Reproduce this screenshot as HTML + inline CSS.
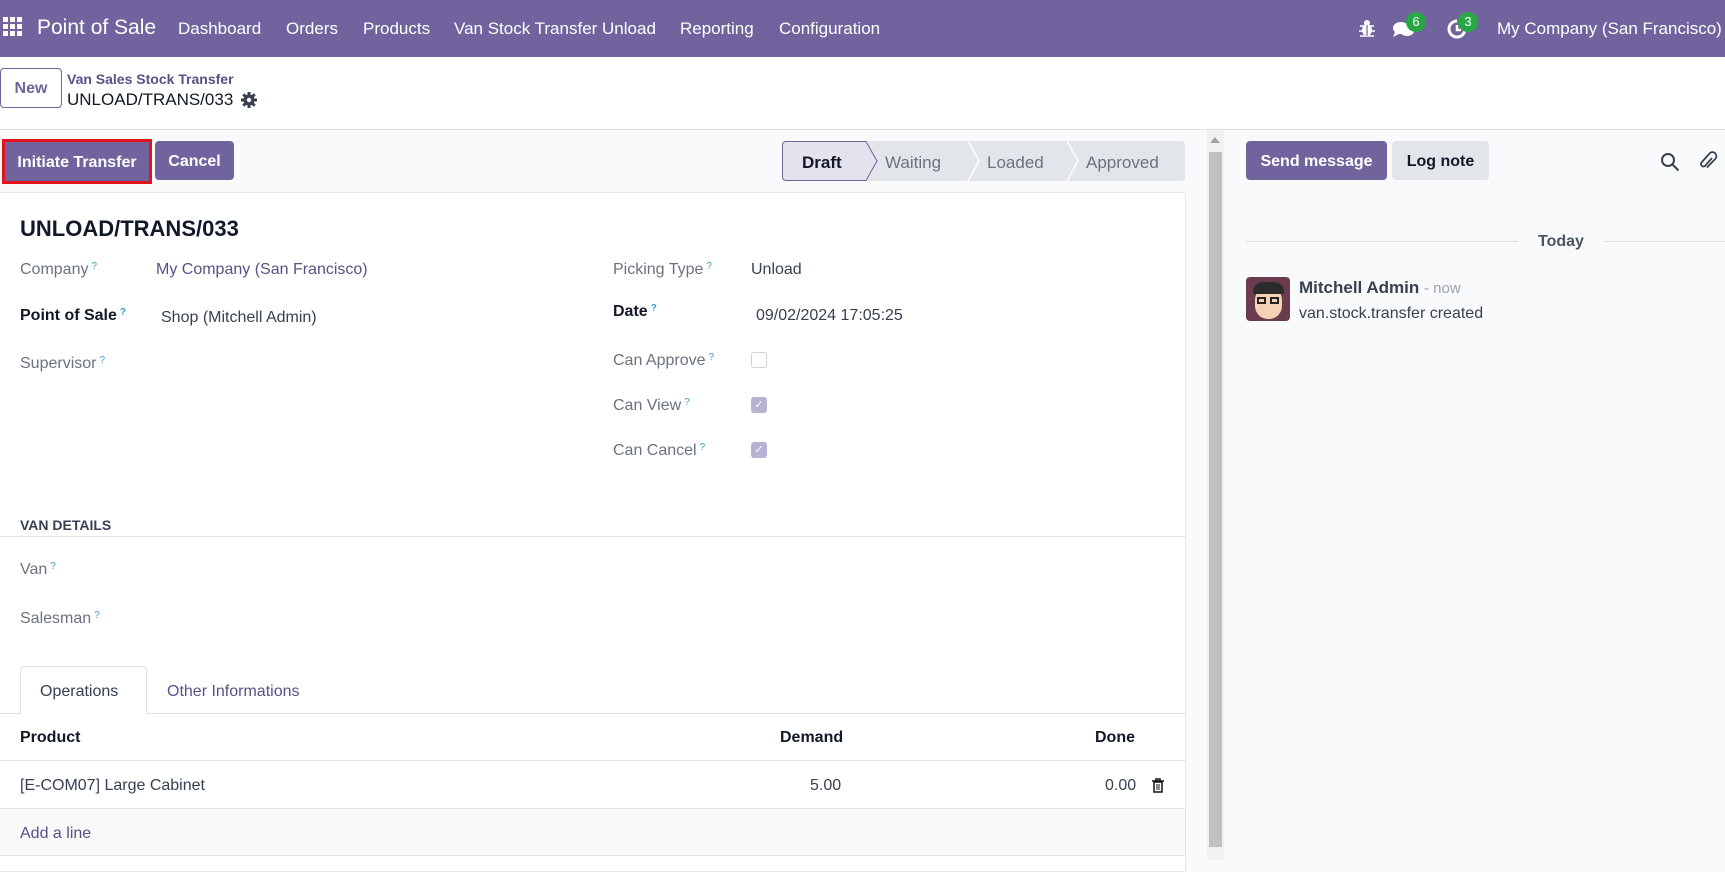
<!DOCTYPE html>
<html><head><meta charset="utf-8"><style>
*{box-sizing:border-box;margin:0;padding:0}
body{width:1725px;height:860px;overflow:hidden;font-family:"Liberation Sans",sans-serif;color:#374151;background:#f9fafb;position:relative;font-size:16px}
.a{position:absolute;white-space:nowrap}
.nav{position:absolute;left:0;top:0;width:1725px;height:57px;background:#71639e;color:#fff}
.nav .a{top:19px;font-size:17px}
.btnp{position:absolute;background:#71639e;color:#fff;font-weight:bold;border-radius:4px;text-align:center;font-size:16px}
.lbl{position:absolute;color:#6b7280;font-size:16px;white-space:nowrap}
.q{color:#3aa0c8;font-size:10px;vertical-align:top;margin-left:3px}
.dark{color:#111827;font-weight:bold}
.cb{position:absolute;width:16px;height:16px;border-radius:3px}
</style></head><body>
<div class="nav">
  <svg class="a" style="left:3px;top:17px" width="20" height="20" viewBox="0 0 20 20" fill="#fff"><rect x="0" y="0" width="5" height="5"/><rect x="7" y="0" width="5" height="5"/><rect x="14" y="0" width="5" height="5"/><rect x="0" y="7" width="5" height="5"/><rect x="7" y="7" width="5" height="5"/><rect x="14" y="7" width="5" height="5"/><rect x="0" y="14" width="5" height="5"/><rect x="7" y="14" width="5" height="5"/><rect x="14" y="14" width="5" height="5"/></svg>
  <div class="a" style="left:37px;top:16px;font-size:21px">Point of Sale</div>
  <div class="a" style="left:178px">Dashboard</div>
  <div class="a" style="left:286px">Orders</div>
  <div class="a" style="left:363px">Products</div>
  <div class="a" style="left:454px">Van Stock Transfer Unload</div>
  <div class="a" style="left:680px">Reporting</div>
  <div class="a" style="left:779px">Configuration</div>
  <svg class="a" style="left:1359px;top:18px" width="16" height="20" viewBox="0 0 16 20" fill="#fff"><ellipse cx="8" cy="12" rx="5" ry="6"/><circle cx="8" cy="5" r="3"/><path d="M1 8h14M0 13h16M1 18h14" stroke="#fff" stroke-width="1.5"/><path d="M8 7v11" stroke="#71639e" stroke-width="1.2"/></svg>
  <svg class="a" style="left:1392px;top:20px" width="24" height="20" viewBox="0 0 24 20" fill="#fff"><ellipse cx="9" cy="8" rx="8" ry="6"/><path d="M3 12l-2 5 6-3z"/><ellipse cx="15" cy="11" rx="7" ry="5"/></svg>
  <div class="a" style="left:1406px;top:12px;width:20px;height:20px;border-radius:10px;background:#28a745;font-size:13px;text-align:center;line-height:20px">6</div>
  <svg class="a" style="left:1446px;top:18px" width="22" height="22" viewBox="0 0 22 22" fill="none" stroke="#fff" stroke-width="3"><path d="M11 3a8 8 0 1 0 8 8"/><path d="M11 7v5h4" stroke-width="2.5"/></svg>
  <div class="a" style="left:1458px;top:12px;width:20px;height:20px;border-radius:10px;background:#28a745;font-size:13px;text-align:center;line-height:20px">3</div>
  <div class="a" style="left:1497px">My Company (San Francisco)</div>
</div>
<div class="a" style="left:0;top:57px;width:1725px;height:73px;background:#fff;border-bottom:1px solid #dee2e6"></div>
<div class="a" style="left:0;top:68px;width:62px;height:40px;border:1px solid #71639e;border-radius:4px;background:#fff;color:#71639e;font-weight:bold;text-align:center;line-height:40px;font-size:16px">New</div>
<div class="a" style="left:67px;top:71px;font-size:14px;font-weight:bold;color:#5c4f86">Van Sales Stock Transfer</div>
<div class="a" style="left:67px;top:90px;font-size:17px;color:#111827">UNLOAD/TRANS/033</div>
<svg class="a" style="left:241px;top:92px" width="16" height="16" viewBox="0 0 16 16"><circle cx="8" cy="8" r="5.5" fill="#374151"/><g stroke="#374151" stroke-width="3"><path d="M8 0v16M0 8h16M2.3 2.3l11.4 11.4M13.7 2.3L2.3 13.7"/></g><circle cx="8" cy="8" r="2.2" fill="#fff"/></svg>

<div class="a" style="left:2px;top:139px;width:150px;height:45px;border:3px solid #e3141e"></div>
<div class="btnp" style="left:5px;top:142px;width:144px;height:39px;line-height:41px;border-radius:0">Initiate Transfer</div>
<div class="btnp" style="left:155px;top:141px;width:79px;height:39px;line-height:42px">Cancel</div>
<svg class="a" style="left:782px;top:141px" width="404" height="40" viewBox="0 0 404 40">
<rect x="0" y="0" width="403" height="40" rx="4" fill="#e2e5ea"/>
<path d="M4 .5H84L95 20 84 39.5H4A3.5 3.5 0 0 1 .5 36V4A3.5 3.5 0 0 1 4 .5z" fill="#e5e2ee" stroke="#71639e"/>
<path d="M186 0l11 20-11 20M285 0l11 20-11 20" stroke="#fff" stroke-width="1.5" fill="none"/>
<text x="20" y="27" font-family="Liberation Sans" font-size="17" fill="#111827" font-weight="bold">Draft</text>
<text x="103" y="27" font-family="Liberation Sans" font-size="17" fill="#6b7280">Waiting</text>
<text x="205" y="27" font-family="Liberation Sans" font-size="17" fill="#6b7280">Loaded</text>
<text x="304" y="27" font-family="Liberation Sans" font-size="17" fill="#6b7280">Approved</text>
</svg>

<div class="a" style="left:0;top:192px;width:1186px;height:680px;background:#fff;border:1px solid #e5e7eb;border-left:none;border-radius:0 4px 0 0"></div>
<div class="a" style="left:20px;top:216px;font-size:22px;color:#111827;font-weight:bold">UNLOAD/TRANS/033</div>
<div class="lbl" style="left:20px;top:261px">Company<span class="q">?</span></div>
<div class="a" style="left:156px;top:261px;color:#5c4f86;font-size:16px">My Company (San Francisco)</div>
<div class="lbl dark" style="left:20px;top:307px">Point of Sale<span class="q">?</span></div>
<div class="a" style="left:161px;top:309px;color:#374151">Shop (Mitchell Admin)</div>
<div class="lbl" style="left:20px;top:355px">Supervisor<span class="q">?</span></div>
<div class="lbl" style="left:613px;top:261px">Picking Type<span class="q">?</span></div>
<div class="a" style="left:751px;top:261px">Unload</div>
<div class="lbl dark" style="left:613px;top:303px">Date<span class="q">?</span></div>
<div class="a" style="left:756px;top:307px">09/02/2024 17:05:25</div>
<div class="lbl" style="left:613px;top:352px">Can Approve<span class="q">?</span></div>
<div class="cb" style="left:751px;top:352px;border:1px solid #ced4da;background:#fff"></div>
<div class="lbl" style="left:613px;top:397px">Can View<span class="q">?</span></div>
<div class="cb" style="left:751px;top:397px;background:#b9b1d2;color:#fff;font-size:11px;text-align:center;line-height:16px">✓</div>
<div class="lbl" style="left:613px;top:442px">Can Cancel<span class="q">?</span></div>
<div class="cb" style="left:751px;top:442px;background:#b9b1d2;color:#fff;font-size:11px;text-align:center;line-height:16px">✓</div>

<div class="a" style="left:20px;top:517px;font-size:14px;font-weight:bold;color:#374151">VAN DETAILS</div>
<div class="a" style="left:0;top:536px;width:1185px;height:1px;background:#dee2e6"></div>
<div class="lbl" style="left:20px;top:561px">Van<span class="q">?</span></div>
<div class="lbl" style="left:20px;top:610px">Salesman<span class="q">?</span></div>

<div class="a" style="left:0;top:713px;width:1185px;height:1px;background:#dee2e6"></div>
<div class="a" style="left:20px;top:666px;width:127px;height:48px;background:#fff;border:1px solid #dee2e6;border-bottom:none;border-radius:4px 4px 0 0"></div>
<div class="a" style="left:40px;top:683px;color:#374151">Operations</div>
<div class="a" style="left:167px;top:683px;color:#5c4f86">Other Informations</div>
<div class="a" style="left:20px;top:729px;font-weight:bold;color:#111827">Product</div>
<div class="a" style="left:780px;top:729px;font-weight:bold;color:#111827">Demand</div>
<div class="a" style="left:1095px;top:729px;font-weight:bold;color:#111827">Done</div>
<div class="a" style="left:0;top:760px;width:1185px;height:1px;background:#dee2e6"></div>
<div class="a" style="left:20px;top:777px">[E-COM07] Large Cabinet</div>
<div class="a" style="left:810px;top:777px">5.00</div>
<div class="a" style="left:1105px;top:777px">0.00</div>
<svg class="a" style="left:1152px;top:778px" width="12" height="15" viewBox="0 0 12 15" fill="none" stroke="#111" stroke-width="1.5"><path d="M0 3h12M4 3V1h4v2"/><rect x="2" y="4" width="8" height="10"/><path d="M5 6v6M7 6v6" stroke-width="1"/></svg>
<div class="a" style="left:0;top:808px;width:1185px;height:48px;background:#f9f9f9;border-top:1px solid #dee2e6;border-bottom:1px solid #dee2e6"></div>
<div class="a" style="left:20px;top:825px;color:#5c4f86">Add a line</div>

<div class="a" style="left:1207px;top:130px;width:17px;height:730px;background:#f1f1f1"></div>
<div class="a" style="left:1209px;top:152px;width:13px;height:695px;background:#c1c1c1"></div>
<div class="a" style="left:1210px;top:137px;width:0;height:0;border:5px solid transparent;border-bottom:6px solid #a3a3a3;border-top:none"></div>

<div class="btnp" style="left:1246px;top:141px;width:141px;height:39px;line-height:42px">Send message</div>
<div class="a" style="left:1392px;top:141px;width:97px;height:39px;line-height:42px;background:#e2e5ea;border-radius:4px;text-align:center;font-weight:bold;color:#111827">Log note</div>
<svg class="a" style="left:1660px;top:152px" width="20" height="20" viewBox="0 0 20 20" fill="none" stroke="#374151" stroke-width="2"><circle cx="8" cy="8" r="6"/><path d="M12.5 12.5l6 6"/></svg>
<svg class="a" style="left:1698px;top:150px" width="20" height="22" viewBox="0 0 20 22" fill="none" stroke="#374151" stroke-width="1.8"><path d="M14 8l-7 8a2.5 2.5 0 0 1-3.5-3.5L12 3a4 4 0 0 1 5.6 5.6L9 17.5"/></svg>
<div class="a" style="left:1246px;top:241px;width:272px;height:1px;background:#dee2e6"></div>
<div class="a" style="left:1604px;top:241px;width:121px;height:1px;background:#dee2e6"></div>
<div class="a" style="left:1538px;top:233px;font-weight:bold;color:#4b5563">Today</div>
<div class="a" style="left:1246px;top:277px;width:44px;height:44px;border-radius:4px;background:#6b3b4f;overflow:hidden">
  <div class="a" style="left:9px;top:10px;width:27px;height:32px;border-radius:13px;background:#f4d3b4"></div>
  <div class="a" style="left:7px;top:5px;width:31px;height:12px;border-radius:10px 10px 2px 2px;background:#2b2b2b"></div>
  <div class="a" style="left:11px;top:20px;width:9px;height:7px;border:2px solid #222"></div>
  <div class="a" style="left:24px;top:20px;width:9px;height:7px;border:2px solid #222"></div>
</div>
<div class="a" style="left:1299px;top:278px;font-weight:bold;color:#374151;font-size:17px">Mitchell Admin <span style="font-weight:normal;color:#9ca3af;font-size:15px">- now</span></div>
<div class="a" style="left:1299px;top:305px;color:#374151">van.stock.transfer created</div>
</body></html>
